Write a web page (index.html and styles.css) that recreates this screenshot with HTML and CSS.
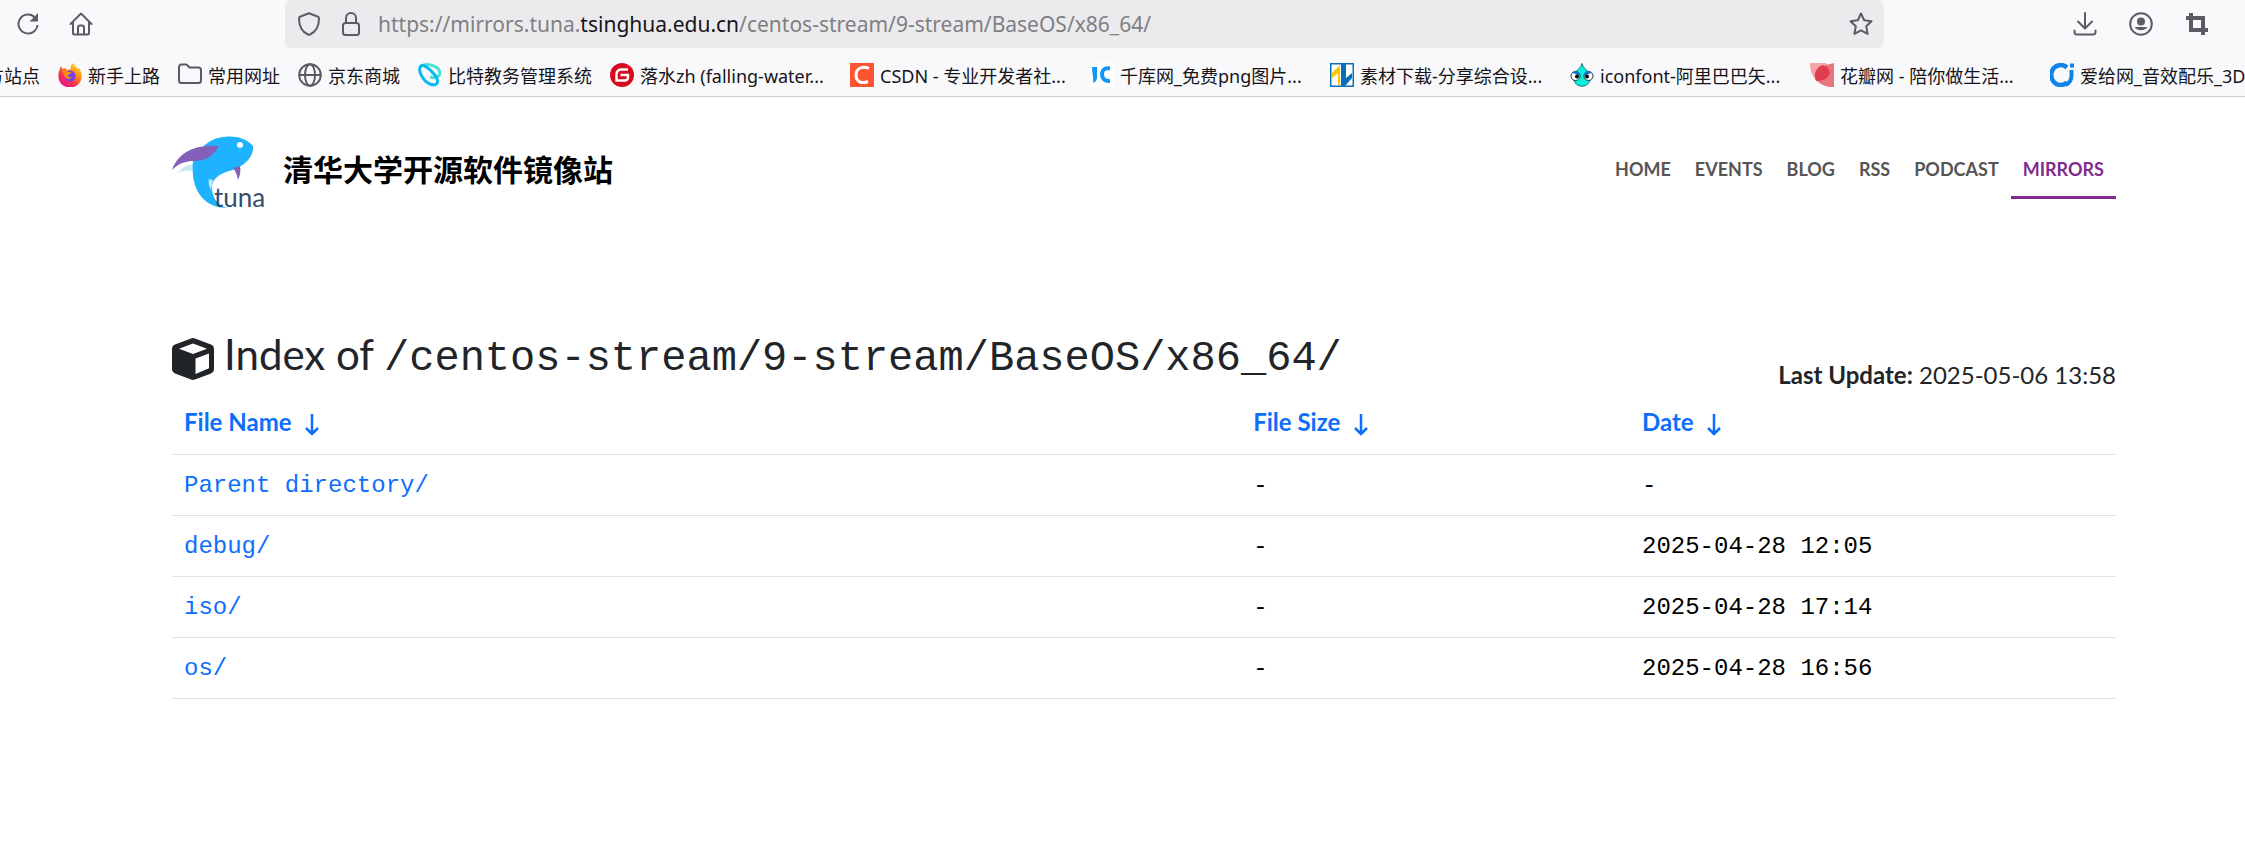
FILE: index.html
```html
<!DOCTYPE html>
<html lang="zh-CN">
<head>
    <meta charset="UTF-8">
    <meta name="viewport" content="width=device-width, initial-scale=1.0">
    <title>Index of /centos-stream/9-stream/BaseOS/x86_64/</title>
    <link rel="stylesheet" href="styles.css">
</head>
<body>
    <div class="browser">
        <div class="toolbar">
            <div class="nav-buttons">
                <button class="icon-btn" aria-label="Reload">
                    <svg viewBox="0 0 24 24"><path d="M19 5.500A9.500 9.500 0 1 0 21.500 13" fill="none" stroke="currentColor" stroke-width="2"/><path d="M22 1v8.500h-8.500z" fill="currentColor"/></svg>
                </button>
                <button class="icon-btn" aria-label="Home">
                    <svg viewBox="0 0 24 24" fill="none" stroke="currentColor" stroke-width="2" stroke-linecap="round" stroke-linejoin="round"><path d="M1.500 12 12 1.500 22.500 12M4 10v11a1.500 1.500 0 0 0 1.500 1.500h13A1.500 1.500 0 0 0 20 21V10M9 22v-6.500a2 2 0 0 1 2-2h2a2 2 0 0 1 2 2V22"/></svg>
                </button>
            </div>
            <div class="urlbar">
                <div class="site-icons">
                    <svg class="icon" viewBox="0 0 24 24" fill="none" stroke="currentColor" stroke-width="2" stroke-linejoin="round"><path d="M12 1.200 20.500 4.500Q22 5 22 6.500C22 14 18.500 20 13 22.500q-1 .5-2 0C5.500 20 2 14 2 6.500Q2 5 3.500 4.500z"/></svg>
                    <svg class="icon" viewBox="0 0 24 24" fill="none" stroke="currentColor" stroke-width="2"><rect x="4" y="11" width="16" height="12" rx="2.500"/><path d="M7 11V6a5 5 0 0 1 10 0v5"/></svg>
                </div>
                <div class="url">https://mirrors.tuna.<b>tsinghua.edu.cn</b>/centos-stream/9-stream/BaseOS/x86_64/</div>
                <button class="icon-btn" aria-label="Bookmark this page">
                    <svg viewBox="0 0 24 24" fill="none" stroke="currentColor" stroke-width="2" stroke-linejoin="round"><path d="M12 1.500l3.200 6.700 7.300 1-5.300 5.100 1.400 7.600L12 18.400l-6.600 3.500 1.400-7.600L1.500 9.200l7.300-1z"/></svg>
                </button>
            </div>
            <div class="tools">
                <button class="icon-btn" aria-label="Downloads">
                    <svg viewBox="0 0 24 24" fill="none" stroke="currentColor" stroke-width="2" stroke-linecap="round" stroke-linejoin="round"><path d="M12 1v15M5 9.500l7 7 7-7M1.500 18.500V20a2.500 2.500 0 0 0 2.500 2.500h16a2.500 2.500 0 0 0 2.500-2.500v-1.500"/></svg>
                </button>
                <button class="icon-btn" aria-label="Account">
                    <svg viewBox="0 0 24 24"><circle cx="12" cy="12" r="10.800" fill="none" stroke="currentColor" stroke-width="2"/><circle cx="12" cy="9.500" r="4" fill="currentColor"/><path d="M5.500 15h13a7 5 0 0 1-13 0z" fill="currentColor"/></svg>
                </button>
                <button class="icon-btn" aria-label="Screenshot">
                    <svg viewBox="0 0 24 24" fill="none" stroke="currentColor" stroke-width="4"><path d="M6 1v17h17M1 6h17v17"/></svg>
                </button>
            </div>
        </div>
        <nav class="bookmarks" aria-label="Bookmarks">
            <a class="cut" href="#">方站点</a>
            <a href="#">
                <svg viewBox="0 0 24 24">
                    <defs>
                        <linearGradient id="fire" x1="1" y1="0" x2="0.300" y2="1"><stop offset="0" stop-color="#fff44f"/><stop offset="0.400" stop-color="#ff980e"/><stop offset="0.700" stop-color="#ff3647"/><stop offset="1" stop-color="#e31587"/></linearGradient>
                    </defs>
                    <path d="M15 0c1 3 4 4 5 6l1-1c2 3 3 6 2.500 9A11.500 10.500 0 0 1 .5 14C0 10 1.500 6 3 3l1.500 3L7 5l2 2 4-1c-1-2 0-4 2-6z" fill="url(#fire)"/>
                    <circle cx="12" cy="13" r="5.500" fill="#7542e5"/>
                    <path d="M4 8c3-1 5 0 6 1l3 0c0 2-2 2-3 3s1 3 4 2c-2 3-6 2-7 0z" fill="#ff8a16"/>
                </svg>新手上路
            </a>
            <a href="#">
                <svg viewBox="0 0 24 24" fill="none" stroke="#5b5b66" stroke-width="2" stroke-linejoin="round"><path d="M3.500 1.500h5l3 3h9a2.500 2.500 0 0 1 2.500 2.500v10.500a2.500 2.500 0 0 1-2.500 2.500h-17A2.500 2.500 0 0 1 1 17.500V4a2.500 2.500 0 0 1 2.500-2.500z"/></svg>常用网址
            </a>
            <a href="#">
                <svg viewBox="0 0 24 24" fill="none" stroke="#5b5b66" stroke-width="2"><circle cx="12" cy="12" r="10.800"/><ellipse cx="12" cy="12" rx="5" ry="10.800"/><path d="M1.500 12h21"/></svg>京东商城
            </a>
            <a href="#">
                <svg viewBox="0 0 24 24" fill="none" stroke-width="3"><path d="M3 3c5-3 15-1 18 4 3 6-3 9-9 7" stroke="#4ae0dc"/><path d="M3 3c-4 4 2 15 9 18 8 3 10-3 4-10C11 5 5 1 3 3z" stroke="#08b9ef"/></svg>比特教务管理系统
            </a>
            <a class="long" href="#">
                <svg viewBox="0 0 24 24"><circle cx="12" cy="12" r="12" fill="#d70b1d"/><path d="M18 6.500h-7a4.500 4.500 0 0 0-4.500 4.500v6.500H15a3 3 0 0 0 3-3V12h-7.500" fill="none" stroke="#fff" stroke-width="2.400"/></svg>落水zh (falling-water...
            </a>
            <a class="long" href="#">
                <svg viewBox="0 0 24 24"><path d="M0 0h24v24H0z" fill="#fc5531"/><path d="M19 5.500c-6-3-13-.5-13 6.500s6 9 12 6.500" fill="none" stroke="#fff" stroke-width="3"/></svg>CSDN - 专业开发者社...
            </a>
            <a class="long" href="#">
                <svg viewBox="0 0 24 24"><path d="M0 0h24v24H0z" fill="#fff"/><path d="M2 4h5v10c0 3-1 5-4 6 1-4-1-10-1-16z" fill="#1296f5"/><path d="M20 5.500c-6-1-8 2-8 6s3 7 8 6.500" fill="none" stroke="#1296f5" stroke-width="4"/></svg>千库网_免费png图片...
            </a>
            <a class="long" href="#">
                <svg viewBox="0 0 24 24"><path d="M.75.75h22.500v22.500H.75z" fill="#fff" stroke="#0870b8" stroke-width="1.500"/><path d="M2 10 10 2v20H8V10l-6 5z" fill="#ffc600"/><path d="M11 1h5v14l6-5v5l-7 8h-4z" fill="#0870b8"/></svg>素材下载-分享综合设...
            </a>
            <a class="long" href="#">
                <svg viewBox="0 0 24 24"><path d="M12 .5c1 4 3 5 6 8 4 4 3 8 1 11-3 5-11 5-14 0-2-3-3-7 1-11 3-3 5-4 6-8z" fill="#06efdc" stroke="#27726f"/><g fill="#fff" stroke="#163c4d"><circle cx="5.500" cy="13" r="4.500"/><circle cx="18.500" cy="13" r="4.500"/></g><path d="M2 9.500 10 13l-1-4-3-1zM22 9.500 14 13l1-4 3-1z" fill="#1473c8"/><circle cx="7" cy="13.500" r="2"/><circle cx="17" cy="13.500" r="2"/></svg>iconfont-阿里巴巴矢...
            </a>
            <a class="long" href="#">
                <svg viewBox="0 0 24 24"><path d="M0 0h16l8 10v14C8 24 0 14 0 0z" fill="#f4a5aa"/><path d="M24 0v24c-8 0-12-2-16-6L16 2z" fill="#e87680"/><path d="M13 2c10 3 9 16-7 16C3 11 6 4 13 2z" fill="#df3e4e"/></svg>花瓣网 - 陪你做生活...
            </a>
            <a href="#">
                <svg viewBox="0 0 24 24" fill="none" stroke="#0f83e6"><path d="M17 4.500A9.500 10 0 1 0 17 19.500" stroke-width="4.500"/><path d="M21.500 7v6c0 4-2 7-6 9" stroke-width="4"/><path d="M20 2.500h4" stroke-width="4"/></svg>爱给网_音效配乐_3D
            </a>
        </nav>
    </div>

    <div class="container">
        <header class="site-header">
            <a class="brand" href="#">
                <svg class="logo" viewBox="0 0 96 74">
                    <path d="M6 37c4-6 11-9 17-9l-3 7c-6-1-10 0-14 2z" fill="#c9e8ec"/>
                    <path d="M30 12C42-3 71-3 81 10c1 13-12 22-24 25-10 3-17 8-17 17 0 9 5 17 15 20C32 72 18 54 21 25z" fill="#1eb3ff"/>
                    <path d="M0 34C6 17 22 8 47 10 39 24 29 25 19 25 10 26 5 29 0 34z" fill="#8460b8"/>
                    <path d="M61 32l7-2c1 5 0 10-2 14-1-5-2-8-5-12z" fill="#8460b8"/>
                    <path d="M37 43l4 1-2 10c-2-4-3-7-2-11z" fill="#c9e8ec"/>
                    <circle cx="68" cy="9" r="3" fill="#fff"/>
                    <text class="logo-text" x="42" y="71">tuna</text>
                </svg>
                <span>清华大学开源软件镜像站</span>
            </a>
            <nav class="menu">
                <a href="#">HOME</a>
                <a href="#">EVENTS</a>
                <a href="#">BLOG</a>
                <a href="#">RSS</a>
                <a href="#">PODCAST</a>
                <a class="active" href="#">MIRRORS</a>
            </nav>
        </header>

        <main>
            <div class="title-row">
                <h1>
                    <svg class="cube" viewBox="0 0 42 42"><path d="M21 0q1 0 2 .4l16 6.200q3 1.200 3 4.400v20q0 3-3 4.400l-16 6.200q-2 .8-4 0L3 35.400Q0 34 0 31V11Q0 7.800 3 6.600L19 .4Q20 0 21 0z" fill="#212529"/><path d="M21 5.500 35 10.700 21 16 7 10.700z" fill="#fff"/><path d="M23.500 20.500 37 15.500v14.800L23.500 36z" fill="#fff"/></svg>
                    <span>Index of <code>/centos-stream/9-stream/BaseOS/x86_64/</code></span>
                </h1>
                <p><b>Last Update:</b> 2025-05-06 13:58</p>
            </div>
            <table>
                <thead>
                    <tr>
                        <th class="name"><a href="#">File Name <svg class="arrow" viewBox="0 0 16 22"><path d="M8 0v20M2 14l6 6 6-6"/></svg></a></th>
                        <th class="size"><a href="#">File Size <svg class="arrow" viewBox="0 0 16 22"><path d="M8 0v20M2 14l6 6 6-6"/></svg></a></th>
                        <th class="date"><a href="#">Date <svg class="arrow" viewBox="0 0 16 22"><path d="M8 0v20M2 14l6 6 6-6"/></svg></a></th>
                    </tr>
                </thead>
                <tbody>
                    <tr>
                        <td><a href="#">Parent directory/</a></td>
                        <td>-</td>
                        <td>-</td>
                    </tr>
                    <tr>
                        <td><a href="#">debug/</a></td>
                        <td>-</td>
                        <td>2025-04-28 12:05</td>
                    </tr>
                    <tr>
                        <td><a href="#">iso/</a></td>
                        <td>-</td>
                        <td>2025-04-28 17:14</td>
                    </tr>
                    <tr>
                        <td><a href="#">os/</a></td>
                        <td>-</td>
                        <td>2025-04-28 16:56</td>
                    </tr>
                </tbody>
            </table>
        </main>
    </div>
</body>
</html>
```

FILE: styles.css
```css
*{
    margin: 0;
    padding: 0;
    box-sizing: border-box;
}
body{
    min-height: 100vh;
    background-color: #fff;
    color: #212529;
    font-family: Lato, "Noto Sans CJK SC", sans-serif;
    font-size: 24px;
    overflow-x: hidden;
}
a {
    color: #0d6efd;
    text-decoration: none;
}
.browser {
    background-color: #f9f9fb;
    border-bottom: 1px solid #ccc;
    color: #15141a;
    font-family: "Noto Sans", "Noto Sans CJK SC", sans-serif;
    overflow: hidden;
}
.toolbar {
    display: flex;
    height: 48px;
}
.icon, .icon-btn {
    flex: none;
    display: block;
    width: 24px;
    height: 24px;
    border: 0;
    background: none;
    color: #5b5b66;
}
.icon-btn svg {
    display: block;
    width: 100%;
    height: 100%;
}
.nav-buttons {
    display: flex;
    align-items: center;
    gap: 29px;
    padding-left: 16px;
    width: 285px;
}
.urlbar {
    flex: 1;
    display: flex;
    align-items: center;
    gap: 15px;
    padding: 0 11px 0 12px;
    background-color: #ebebed;
    border-radius: 6px;
}
.site-icons {
    display: flex;
    gap: 18px;
}
.url {
    flex: 1;
    font-size: 21px;
    color: #7f7f84;
    white-space: nowrap;
}
.url b {
    font-weight: normal;
    color: #15141a;
}
.tools {
    display: flex;
    align-items: center;
    justify-content: flex-end;
    gap: 32px;
    width: 361px;
    padding-right: 36px;
}
.bookmarks {
    display: flex;
    gap: 18px;
    height: 48px;
    padding-top: 5px;
    white-space: nowrap;
}
.bookmarks a {
    flex: none;
    display: flex;
    align-items: center;
    gap: 6px;
    color: #15141a;
    font-size: 18px;
}
.bookmarks svg {
    flex: none;
    width: 24px;
    height: 24px;
}
.bookmarks .cut {
    justify-content: flex-end;
    width: 40px;
}
.bookmarks .long {
    width: 222px;
}
.container {
    padding: 0 129px 0 172px;
}
.site-header {
    display: flex;
    justify-content: space-between;
    align-items: center;
    padding-top: 39px;
}
.brand {
    display: flex;
    align-items: center;
    gap: 15px;
    color: #000;
    font-size: 30px;
    font-weight: bold;
}
.brand span {
    padding-bottom: 10px;
}
.logo {
    display: block;
    width: 96px;
    height: 74px;
}
.logo-text {
    font-family: Lato, sans-serif;
    font-size: 26px;
    font-weight: normal;
    fill: #344d6d;
}
.menu {
    display: flex;
    margin-bottom: 4px;
}
.menu a {
    padding: 12px 12px 13px;
    border-bottom: 3px solid transparent;
    color: #555;
    font-size: 18px;
    font-weight: bold;
    line-height: 27px;
}
.menu .active {
    color: #7f2b8f;
    border-bottom-color: #7f2b8f;
}
.title-row {
    display: flex;
    justify-content: space-between;
    align-items: flex-end;
    margin-top: 119px;
}
h1 {
    display: flex;
    align-items: center;
    gap: 10px;
    padding-bottom: 9px;
    font-size: 42px;
    font-weight: normal;
    line-height: 50px;
}
.cube {
    width: 42px;
    height: 42px;
    margin-top: 4px;
}
code, td {
    font-family: "Liberation Mono", monospace;
}
code {
    font-size: 42px;
}
.title-row p {
    line-height: 36px;
}
table {
    width: 100%;
    border-collapse: collapse;
    table-layout: fixed;
}
th, td {
    border-bottom: 1px solid #dee2e6;
    text-align: left;
    line-height: 36px;
}
th {
    padding: 11px 12px 14px;
}
td {
    padding: 13px 12px 11px;
    color: #000;
}
.name {
    width: 55%;
}
.size {
    width: 20%;
}
.date {
    width: 25%;
}
.arrow {
    width: 16px;
    height: 22px;
    margin-left: 7px;
    vertical-align: -5px;
    fill: none;
    stroke: currentColor;
    stroke-width: 2.500;
}
```
